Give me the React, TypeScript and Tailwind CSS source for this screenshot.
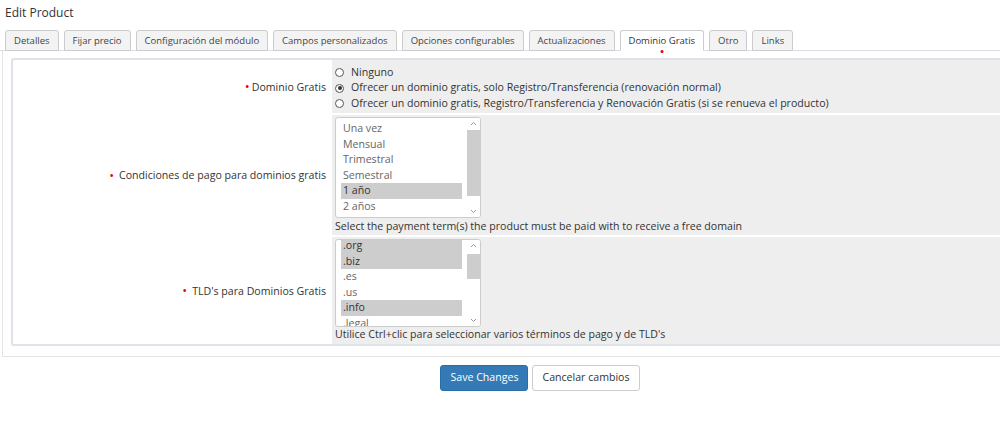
import React from "react";

const tabs = [
  "Detalles",
  "Fijar precio",
  "Configuración del módulo",
  "Campos personalizados",
  "Opciones configurables",
  "Actualizaciones",
  "Dominio Gratis",
  "Otro",
  "Links",
];

const paymentTerms = [
  { label: "Una vez", selected: false },
  { label: "Mensual", selected: false },
  { label: "Trimestral", selected: false },
  { label: "Semestral", selected: false },
  { label: "1 año", selected: true },
  { label: "2 años", selected: false },
];

const tlds = [
  { label: ".org", selected: true },
  { label: ".biz", selected: true },
  { label: ".es", selected: false },
  { label: ".us", selected: false },
  { label: ".info", selected: true },
  { label: ".legal", selected: false },
];

function Radio({ checked }: { checked?: boolean }) {
  return (
    <span className="inline-flex items-center justify-center w-[9px] h-[9px] rounded-full border border-[#555] bg-white mr-[7px] shrink-0">
      {checked && <span className="w-[4px] h-[4px] rounded-full bg-[#333]" />}
    </span>
  );
}

function ListBox({
  items,
  offset,
  height,
  thumbTop,
  thumbHeight,
}: {
  items: { label: string; selected: boolean }[];
  offset: number;
  height: number;
  thumbTop: number;
  thumbHeight: number;
}) {
  return (
    <div
      className="flex w-[146px] border border-[#ccc] rounded-[3px] bg-white overflow-hidden"
      style={{ height }}
    >
      <div className="flex-1 overflow-hidden px-[5px]">
        <div style={{ marginTop: offset }}>
          {items.map((it) => (
            <div
              key={it.label}
              className={`h-[15.5px] leading-[15.5px] pl-[2px] ${
                it.selected ? "bg-[#cdcdcd] text-[#333]" : "text-[#666]"
              }`}
            >
              {it.label}
            </div>
          ))}
        </div>
      </div>
      {/* scrollbar */}
      <div className="relative w-[13px] bg-white">
        <svg className="absolute left-[3px] top-[3px]" width="7" height="5" viewBox="0 0 7 5">
          <path d="M1 4 L3.5 1.5 L6 4" fill="none" stroke="#999" strokeWidth="1" />
        </svg>
        <div
          className="absolute left-0 right-0 bg-[#cdcdcd]"
          style={{ top: thumbTop, height: thumbHeight }}
        />
        <svg className="absolute left-[3px] bottom-[3px]" width="7" height="5" viewBox="0 0 7 5">
          <path d="M1 1 L3.5 3.5 L6 1" fill="none" stroke="#999" strokeWidth="1" />
        </svg>
      </div>
    </div>
  );
}

function Row({
  label,
  spaced,
  children,
  last,
}: {
  label: string;
  spaced?: boolean;
  children: React.ReactNode;
  last?: boolean;
}) {
  return (
    <div className={`flex ${last ? "" : "border-b-2 border-white"}`}>
      <div className="w-[319px] shrink-0 flex items-center justify-end pr-[6px] pt-[2px] text-[#333]">
        <span
          className={`text-[#e00] text-[13px] leading-none relative -top-[1px] ${
            spaced ? "mr-[5px]" : "mr-[2px]"
          }`}
        >
          •
        </span>
        {label}
      </div>
      <div className="flex-1 bg-[#eeeeee] pl-[3px]">{children}</div>
    </div>
  );
}

export default function App() {
  return (
    <div className="w-[1000px] h-[434px] bg-white text-[10.6px] text-[#333] font-['Open_Sans',sans-serif]">
      <h1 className="text-[12px] h-[30px] pt-[4px] pl-[5px] text-[#333]">Edit Product</h1>

      {/* Tabs */}
      <div className="flex gap-[5px] pl-[5px] h-[21px] border-b border-[#ddd]">
        {tabs.map((t) => {
          const active = t === "Dominio Gratis";
          return (
            <div
              key={t}
              className={`relative h-[21px] px-[8px] pt-[1px] flex items-center text-[9.5px] border border-[#ccc] rounded-t-[3px] ${
                active
                  ? "bg-white border-b-white text-[#333]"
                  : "bg-[#f3f3f3] text-[#444]"
              }`}
            >
              {t}
              {active && (
                <span className="absolute left-1/2 -translate-x-1/2 bottom-[-3px] w-[3px] h-[3px] rounded-full bg-[#e00]" />
              )}
            </div>
          );
        })}
      </div>

      {/* Panel */}
      <div className="border-b border-l border-[#e4e4e4] ml-[2px] pt-[7px] pb-[10px] pl-[8px]">
        <div className="border-2 border-r-0 border-[#dde3e8] rounded-l-[3px] bg-white">
          <Row label="Dominio Gratis">
            <div className="flex flex-col h-[53px] pt-[5px]">
              <div className="flex items-center h-[15.5px]">
                <Radio />
                Ninguno
              </div>
              <div className="flex items-center h-[15.5px]">
                <Radio checked />
                Ofrecer un dominio gratis, solo Registro/Transferencia (renovación normal)
              </div>
              <div className="flex items-center h-[15.5px]">
                <Radio />
                Ofrecer un dominio gratis, Registro/Transferencia y Renovación Gratis (si se renueva el producto)
              </div>
            </div>
          </Row>

          <Row label="Condiciones de pago para dominios gratis" spaced>
            <div className="pt-[2px] pb-[2px]">
              <ListBox items={paymentTerms} offset={3} height={101} thumbTop={12} thumbHeight={66} />
              <div className="h-[15px] leading-[15px] pt-[1px]">
                Select the payment term(s) the product must be paid with to receive a free domain
              </div>
            </div>
          </Row>

          <Row label="TLD's para Dominios Gratis" spaced last>
            <div className="pt-[2px] pb-[2px]">
              <ListBox items={tlds} offset={-2} height={88} thumbTop={14} thumbHeight={25} />
              <div className="h-[15px] leading-[15px]">
                Utilice Ctrl+clic para seleccionar varios términos de pago y de TLD's
              </div>
            </div>
          </Row>
        </div>
      </div>

      {/* Buttons */}
      <div className="flex justify-center gap-[4px] pt-[8px] pl-[80px]">
        <button className="h-[26px] px-[9px] rounded-[3px] bg-[#337ab7] border border-[#2e6da4] text-white text-[10.6px]">
          Save Changes
        </button>
        <button className="h-[26px] px-[9px] rounded-[3px] bg-white border border-[#ccc] text-[#333] text-[10.6px]">
          Cancelar cambios
        </button>
      </div>
    </div>
  );
}
